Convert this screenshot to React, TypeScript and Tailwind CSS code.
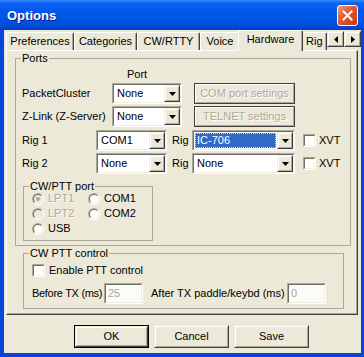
import React from 'react';

// classic 3D helpers
const sunkenOuter = 'border border-t-[#ACA899] border-l-[#ACA899] border-b-white border-r-white';
const sunkenInner = 'border border-t-[#716F64] border-l-[#716F64] border-b-[#F1EFE2] border-r-[#F1EFE2]';
const raisedOuter = 'border border-t-[#F1EFE2] border-l-[#F1EFE2] border-b-[#404040] border-r-[#404040]';
const raisedInner = 'border border-t-white border-l-white border-b-[#ACA899] border-r-[#ACA899]';

const Triangle = ({ dir = 'down', color = '#000' }: { dir?: 'down' | 'left' | 'right'; color?: string }) => {
  if (dir === 'down')
    return (
      <svg width="7" height="4" viewBox="0 0 7 4">
        <polygon points="0,0 7,0 3.5,4" fill={color} />
      </svg>
    );
  if (dir === 'left')
    return (
      <svg width="4" height="7" viewBox="0 0 4 7">
        <polygon points="4,0 4,7 0,3.5" fill={color} />
      </svg>
    );
  return (
    <svg width="4" height="7" viewBox="0 0 4 7">
      <polygon points="0,0 0,7 4,3.5" fill={color} />
    </svg>
  );
};

const DropButton = () => (
  <div className={`w-[16px] h-full flex ${raisedOuter}`}>
    <div className={`flex-1 flex items-center justify-center bg-[#ECE9D8] ${raisedInner}`}>
      <Triangle />
    </div>
  </div>
);

const Combo = ({ w, value, selected }: { w: string; value: string; selected?: boolean }) => (
  <div className={`${w} h-[21px] flex shrink-0 ${sunkenOuter}`}>
    <div className={`flex-1 flex bg-white ${sunkenInner}`}>
      <div className="flex-1 flex items-center px-[1px]">
        {selected ? (
          <span className="flex-1 h-[15px] flex items-center pl-[1px] bg-[#316AC5] text-white border border-dotted border-[#E8D890]">
            {value}
          </span>
        ) : (
          <span className="pl-[2px]">{value}</span>
        )}
      </div>
      <DropButton />
    </div>
  </div>
);

const Check = () => (
  <div className={`w-[13px] h-[13px] shrink-0 flex ${sunkenOuter}`}>
    <div className={`flex-1 bg-white ${sunkenInner}`} />
  </div>
);

const Radio = ({ checked, disabled }: { checked?: boolean; disabled?: boolean }) => (
  <div className="w-[12px] h-[12px] shrink-0 rounded-full border border-t-[#ACA899] border-l-[#ACA899] border-b-white border-r-white">
    <div
      className={`w-full h-full rounded-full border border-t-[#716F64] border-l-[#716F64] border-b-[#F1EFE2] border-r-[#F1EFE2] flex items-center justify-center ${
        disabled ? 'bg-[#ECE9D8]' : 'bg-white'
      }`}
    >
      {checked && <div className="w-[4px] h-[4px] rounded-full bg-[#ACA899]" />}
    </div>
  </div>
);

const RadioItem = ({ label, checked, disabled, w }: { label: string; checked?: boolean; disabled?: boolean; w: string }) => (
  <div className={`${w} flex items-center`}>
    <Radio checked={checked} disabled={disabled} />
    <span className={`ml-[4px] ${disabled ? 'text-[#ACA899] [text-shadow:1px_1px_0_#fff]' : ''}`}>{label}</span>
  </div>
);

const Button = ({ children, isDefault }: { children: React.ReactNode; isDefault?: boolean }) => (
  <div className={`w-[75px] h-[23px] flex ${isDefault ? 'border border-black' : ''}`}>
    <div className={`flex-1 flex ${raisedOuter}`}>
      <div className={`flex-1 flex items-center justify-center ${raisedInner}`}>{children}</div>
    </div>
  </div>
);

const DisabledButton = ({ children }: { children: React.ReactNode }) => (
  <div className="w-[101px] h-[21px] -mt-[1px] flex shrink-0 border border-[#404040]">
    <div className={`flex-1 flex items-center justify-center whitespace-nowrap text-[#ACA899] [text-shadow:1px_1px_0_#fff] ${raisedInner}`}>
      {children}
    </div>
  </div>
);

const Edit = ({ value }: { value: string }) => (
  <div className={`w-[39px] h-[21px] flex shrink-0 ${sunkenOuter}`}>
    <div className={`flex-1 flex items-center pl-[2px] bg-[#FBFBF8] text-[#ACA899] ${sunkenInner}`}>{value}</div>
  </div>
);

const tabBase =
  'flex items-center justify-center shrink-0 whitespace-nowrap rounded-t-[2px] border-l border-t border-white border-r border-r-[#404040] shadow-[inset_-1px_0_#ACA899]';

export default function App() {
  return (
    <div className="w-[364px] h-[357px] flex flex-col bg-[#0846DB] pb-[4px] text-[11px] leading-[13px] text-black font-['Liberation_Sans',Arial,sans-serif]">
      {/* title bar */}
      <div className="h-[30px] shrink-0 flex items-center pl-[7px] pr-[6px] bg-[linear-gradient(to_bottom,#3A8CFF_0%,#0D62F0_10%,#0058EE_35%,#0054E3_70%,#0048D4_90%,#003DC6_100%)]">
        <span className="flex-1 text-white font-bold text-[13px] [text-shadow:1px_1px_0_#0A1E8C]">Options</span>
        <div className="w-[21px] h-[21px] rounded-[3px] border border-white flex items-center justify-center bg-[linear-gradient(135deg,#EC9A7E_0%,#E0562F_45%,#C43A12_100%)]">
          <svg width="11" height="11" viewBox="0 0 11 11">
            <path d="M1.5 1.5 L9.5 9.5 M9.5 1.5 L1.5 9.5" stroke="#fff" strokeWidth="2" strokeLinecap="square" />
          </svg>
        </div>
      </div>

      {/* client area */}
      <div className="flex-1 ml-[4px] mr-[3px] bg-[#ECE9D8] flex flex-col">
        {/* tabs */}
        <div className="h-[20px] pl-[2px] flex items-end relative z-10">
          <div className={`${tabBase} w-[68px] h-[18px]`}>Preferences</div>
          <div className={`${tabBase} w-[63px] h-[18px]`}>Categories</div>
          <div className={`${tabBase} w-[63px] h-[18px]`}>CW/RTTY</div>
          <div className={`${tabBase} w-[40px] h-[18px]`}>Voice</div>
          <div className={`${tabBase} w-[65px] h-[21px] -mb-[1px] -ml-[2px] -mr-[2px] pb-[3px] bg-[#ECE9D8] relative z-10`}>Hardware</div>
          <div className={`${tabBase} w-[26px] h-[18px] !justify-start pl-[4px]`}>Rig</div>
          <div className="self-start mt-[1px] flex">
            {(['left', 'right'] as const).map((d) => (
              <div key={d} className={`w-[17px] h-[16px] flex ${raisedOuter}`}>
                <div className={`flex-1 flex items-center justify-center bg-[#ECE9D8] ${raisedInner}`}>
                  <Triangle dir={d} />
                </div>
              </div>
            ))}
          </div>
        </div>

        {/* tab panel */}
        <div className="ml-[2px] w-[352px] h-[265px] border-t border-l border-white border-r border-b border-r-[#404040] border-b-[#404040] shadow-[inset_-1px_-1px_#ACA899] flex flex-col">
          <fieldset className="mt-[1px] ml-[8px] w-[336px] h-[194px] border border-[#ACA899] flex flex-col">
            <legend className="ml-[5px] px-[1px]">Ports</legend>
            <div className="mt-[3px] h-[13px] pl-[111px]">Port</div>

            <div className="mt-[2px] h-[21px] flex items-center pl-[6px] whitespace-nowrap">
              <span className="w-[90px]">PacketCluster</span>
              <Combo w="w-[70px]" value="None" />
              <div className="ml-[12px]">
                <DisabledButton>COM port settings</DisabledButton>
              </div>
            </div>

            <div className="mt-[2px] h-[21px] flex items-center pl-[6px] whitespace-nowrap">
              <span className="w-[90px]">Z-Link (Z-Server)</span>
              <Combo w="w-[70px]" value="None" />
              <div className="ml-[12px]">
                <DisabledButton>TELNET settings</DisabledButton>
              </div>
            </div>

            <div className="mt-[3px] h-[21px] flex items-center pl-[6px]">
              <span className="w-[74px]">Rig 1</span>
              <Combo w="w-[71px]" value="COM1" />
              <span className="ml-[5px] w-[20px]">Rig</span>
              <Combo w="w-[103px]" value="IC-706" selected />
              <div className="ml-[8px]">
                <Check />
              </div>
              <span className="ml-[3px]">XVT</span>
            </div>

            <div className="mt-[2px] h-[21px] flex items-center pl-[6px]">
              <span className="w-[74px]">Rig 2</span>
              <Combo w="w-[71px]" value="None" />
              <span className="ml-[5px] w-[20px]">Rig</span>
              <Combo w="w-[103px]" value="None" />
              <div className="ml-[8px]">
                <Check />
              </div>
              <span className="ml-[3px]">XVT</span>
            </div>

            <fieldset className="mt-[6px] ml-[7px] w-[130px] h-[61px] border border-[#ACA899] flex flex-col">
              <legend className="ml-[5px] px-[1px]">CW/PTT port</legend>
              <div className="-mt-[2px] h-[15px] flex pl-[8px]">
                <RadioItem w="w-[56px]" label="LPT1" checked disabled />
                <RadioItem w="w-[56px]" label="COM1" />
              </div>
              <div className="h-[15px] flex pl-[8px]">
                <RadioItem w="w-[56px]" label="LPT2" disabled />
                <RadioItem w="w-[56px]" label="COM2" />
              </div>
              <div className="h-[15px] flex pl-[8px]">
                <RadioItem w="w-[56px]" label="USB" />
              </div>
            </fieldset>
          </fieldset>

          <fieldset className="mt-[1px] ml-[16px] w-[321px] h-[62px] border border-[#ACA899] flex flex-col">
            <legend className="ml-[5px] px-[1px]">CW PTT control</legend>
            <div className="mt-[2px] h-[17px] flex items-center pl-[8px]">
              <Check />
              <span className="ml-[4px]">Enable PTT control</span>
            </div>
            <div className="mt-[4px] h-[21px] flex items-center pl-[8px] whitespace-nowrap">
              <span className="w-[72px] tracking-[-0.3px]">Before TX (ms)</span>
              <Edit value="25" />
              <span className="ml-[8px] w-[136px]">After TX paddle/keybd (ms)</span>
              <Edit value="0" />
            </div>
          </fieldset>
        </div>

        {/* buttons */}
        <div className="mt-[10px] pl-[70px] flex gap-[5px]">
          <Button isDefault>OK</Button>
          <Button>Cancel</Button>
          <Button>Save</Button>
        </div>
      </div>
    </div>
  );
}
